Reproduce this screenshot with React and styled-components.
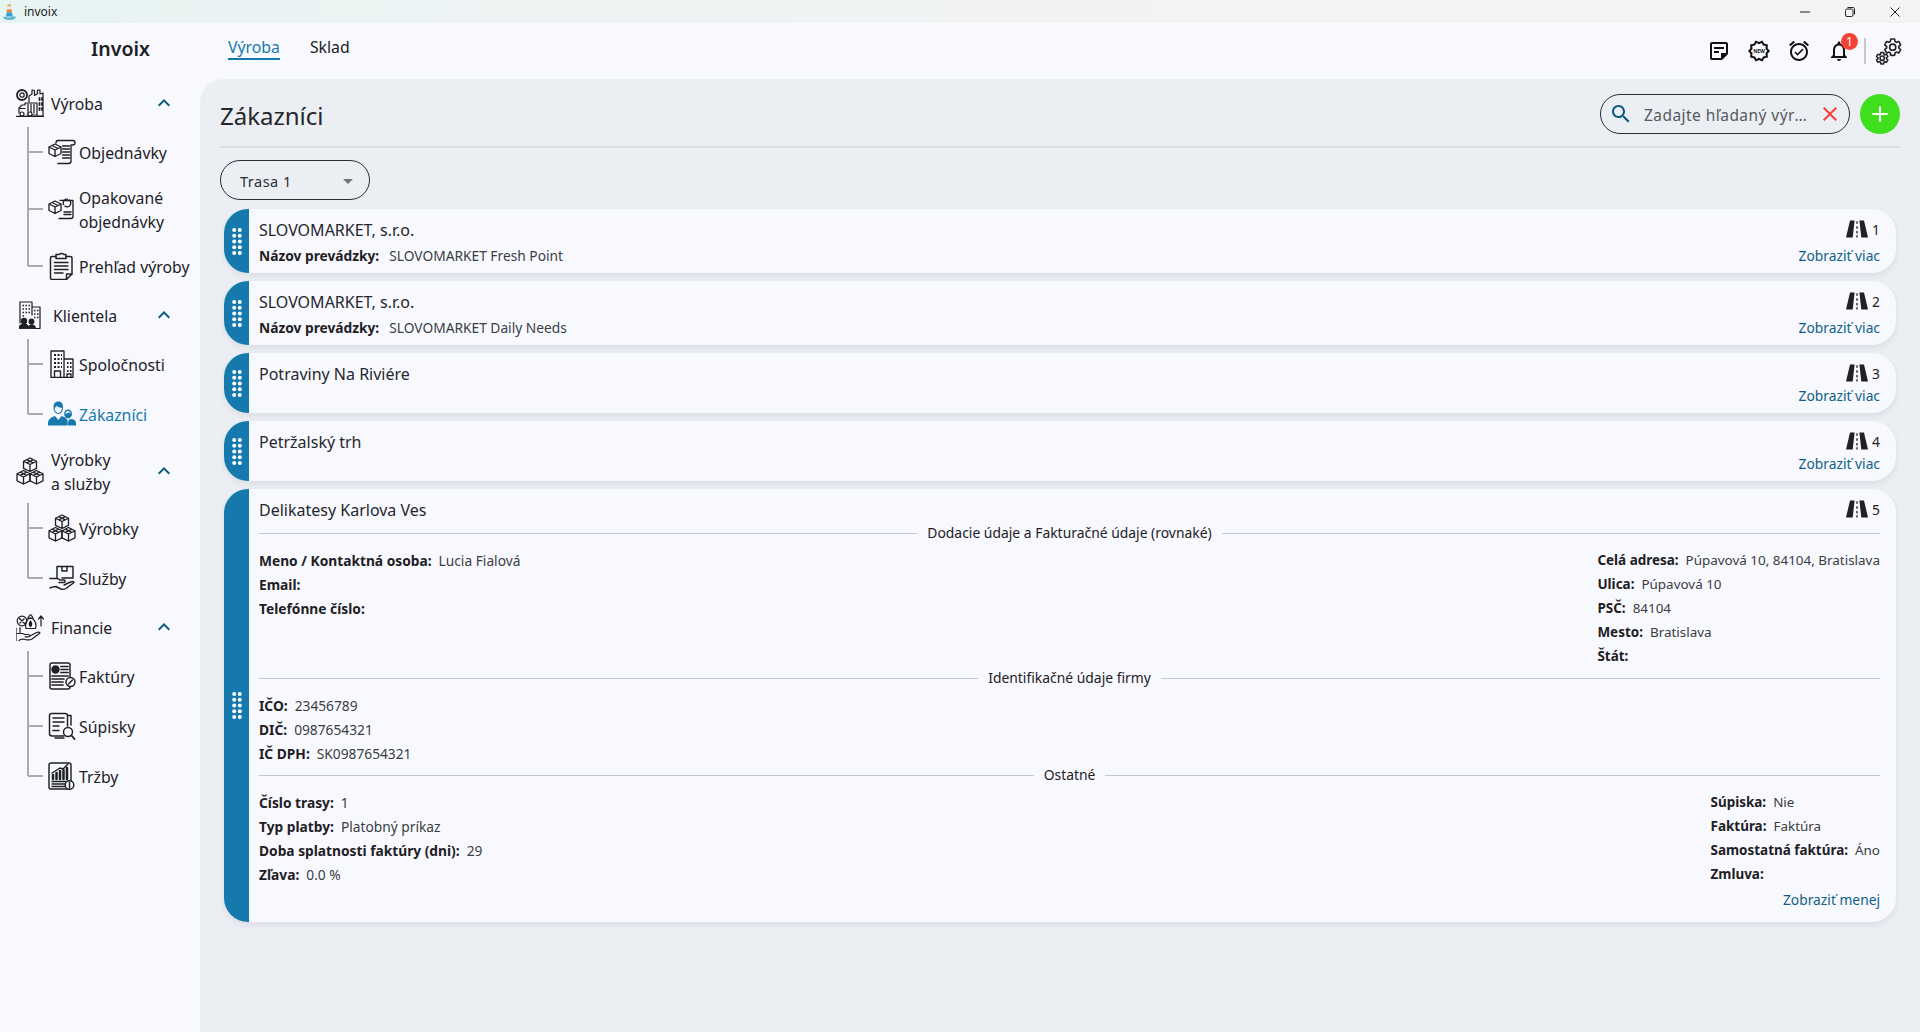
import React from 'react';
import styled, { createGlobalStyle } from 'styled-components';

const Global = createGlobalStyle`
  html, body { margin: 0; padding: 0; background: #f8f9ff; }
  body { font-family: "Noto Sans", "Liberation Sans", sans-serif; color: #1e2024; }
  * { box-sizing: border-box; }
`;

const Page = styled.div`
  width: 1920px; height: 1032px; overflow: hidden;
  display: flex; flex-direction: column; background: #f8f9ff;
`;
const TitleBar = styled.div`
  height: 23px; flex: none; display: flex; align-items: center;
  padding-left: 3px;
  background: linear-gradient(90deg, #e6f4f2 0%, #eff3f4 30%, #f3f3f3 70%, #f3f3f3 100%);
`;
const AppName = styled.span`
  font-family: "Noto Sans", sans-serif; font-size: 12px; color: #222; margin-left: 8px; flex: 1;
`;
const WinButtons = styled.div`display: flex; align-items: center; padding-right: 3px;`;
const WinBtn = styled.div`width: 45px; height: 20px; display: flex; align-items: center; justify-content: center; color: #222;`;

const Header = styled.header`height: 56px; flex: none; display: flex; align-items: center;`;
const Brand = styled.div`
  width: 200px; padding-left: 41px; text-align: center;
  font-size: 19.5px; font-weight: 600; color: #1e2024; line-height: 24px; margin-top: -4px;
`;
const Tabs = styled.nav`display: flex; gap: 30px; margin-left: 28px; flex: 1; margin-top: -5px;`;
const Tab = styled.a`
  font-size: 15.8px; line-height: 20px; padding-bottom: 1px;
  font-weight: 400;
  color: ${p => (p.$active ? '#1679ad' : '#1e2024')};
  border-bottom: 2px solid ${p => (p.$active ? '#1679ad' : 'transparent')};
`;
const Tools = styled.div`display: flex; align-items: center; padding-right: 17px;`;
const ToolBtn = styled.div`
  width: 40px; height: 32px; display: flex; align-items: center; justify-content: center;
  position: relative; color: #111;
`;
const BadgeCount = styled.span`
  position: absolute; right: 1px; top: -2px; width: 17px; height: 17px; border-radius: 50%;
  background: #f44336; color: #fff; font-size: 12px; line-height: 17px; text-align: center;
`;
const ToolDivider = styled.div`width: 2px; height: 26px; background: #c8c8c8; margin: 0 9px 0 5px;`;

const Body = styled.div`flex: 1; min-height: 0; display: flex;`;
const Sidebar = styled.aside`width: 200px; flex: none;`;
const GroupHead = styled.div`
  height: ${p => (p.$double ? 64 : 48)}px; display: flex; align-items: center;
  padding: 0 24px 0 ${p => (p.$indent ? 19 : 16)}px; font-size: 15.8px; line-height: 24px;
`;
const GroupIcon = styled.div`
  width: ${p => (p.$indent ? 34 : 35)}px; flex: none; display: flex;
`;
const GroupLabel = styled.span`flex: 1; padding-top: 2px;`;
const Tree = styled.ul`list-style: none; margin: 0; padding: 0;`;
const TreeItem = styled.li`
  position: relative; height: ${p => (p.$double ? 64 : 50)}px;
  display: flex; align-items: center; padding-left: 48px; gap: 3px;
  font-size: 15.8px; line-height: 24px; color: ${p => (p.$active ? '#1679ad' : '#1e2024')};
  &::before {
    content: ''; position: absolute; left: 27px; top: 0; width: 2px; background: #ababab;
    height: ${p => (p.$last ? '50%' : '100%')};
  }
  &::after {
    content: ''; position: absolute; left: 28px; top: calc(50% - 1px); width: 15px; height: 2px; background: #ababab;
  }
`;
const TreeIcon = styled.div`width: 28px; flex: none; display: flex; justify-content: center;`;
const TreeLabel = styled.span`padding-top: 2px; white-space: nowrap;`;

const Main = styled.main`
  flex: 1; min-width: 0; background: #ebeef3; border-top-left-radius: 24px; padding: 15px 20px 0;
`;
const TitleRow = styled.div`
  height: 54px; display: flex; align-items: flex-start; border-bottom: 2px solid #d9dce1;
`;
const PageTitle = styled.h1`
  margin: 0; flex: 1; font-size: 24px; font-weight: 400; line-height: 44px; color: #24272c;
`;
const Search = styled.div`
  width: 250px; height: 40px; border: 1px solid #2a2d33; border-radius: 20px;
  display: flex; align-items: center; padding: 0 7px 0 8px; gap: 11px;
`;
const SearchText = styled.span`
  flex: 1; min-width: 0; overflow: hidden; white-space: nowrap; text-overflow: ellipsis;
  font-size: 15.5px; letter-spacing: 0.45px; color: #565a60; padding-top: 2px;
`;
const AddBtn = styled.div`
  width: 40px; height: 40px; border-radius: 50%; background: #3fdf1e; margin-left: 10px;
  display: flex; align-items: center; justify-content: center; color: #fff;
`;
const Select = styled.div`
  width: 150px; height: 40px; margin-top: 12px; border: 1px solid #2a2d33; border-radius: 20px;
  display: flex; align-items: center; justify-content: space-between; padding: 1px 9px 0 19px;
  font-size: 14.5px; letter-spacing: 0.5px; color: #2a2d33;
`;
const CardList = styled.div`margin: 9px 4px 0; display: flex; flex-direction: column; gap: 8px;`;
const Card = styled.article`
  display: flex; background: #f8f9ff; border-radius: 24px; overflow: hidden;
  box-shadow: 0 3px 6px rgba(40, 50, 70, 0.08);
`;
const Handle = styled.div`
  width: 25px; flex: none; background: #1679ad; display: flex; align-items: center; justify-content: center;
`;
const CardBody = styled.div`flex: 1; min-width: 0; padding: 10px 16px 5px 10px;`;
const CardHead = styled.div`
  height: 21px; display: flex; align-items: center; justify-content: space-between;
`;
const CardTitle = styled.h2`margin: 0; font-size: 16px; font-weight: 400; line-height: 22px; color: #24272c;`;
const RouteNo = styled.div`display: flex; align-items: center; gap: 4px; font-size: 13.8px; color: #1e2024; padding-bottom: 1px;`;
const CardFoot = styled.div`
  margin-top: ${p => (p.$gap ? 4 : 0)}px; height: 24px; display: flex; align-items: center; justify-content: space-between;
`;
const Link = styled.a`font-size: 13.8px; line-height: 24px; color: #0f5f85; margin-left: auto;`;
const Field = styled.div`
  height: 24px; display: flex; align-items: center; gap: ${p => p.$gap || 7}px;
  font-size: ${p => (p.$narrow ? 13.45 : 13.75)}px; white-space: nowrap; padding-bottom: 2px;
`;
const Label = styled.b`font-weight: 700; color: #1e2024;`;
const Value = styled.span`font-weight: 400; color: #3a3d42;`;
const Divider = styled.div`
  height: 18px; display: flex; align-items: center; gap: 10px; font-size: 13.9px; color: #1e2024;
  margin-top: ${p => (p.$first ? 4 : 0)}px; padding-bottom: 2px;
  &::before, &::after { content: ''; flex: 1; height: 1px; background: #bfc7d0; transform: translateY(1px); }
`;
const Columns = styled.div`margin-top: 7px; display: flex; justify-content: space-between;`;
const MenejRow = styled.div`margin-top: 1px; margin-bottom: 5px; display: flex; justify-content: flex-end; height: 24px;`;

/* ---------- icons ---------- */
const Line = styled.svg`
  display: block; flex: none; fill: none; stroke: #1e2024; stroke-width: ${p => (p.$w || 1.1) * 1.12}; stroke-linejoin: round; stroke-linecap: round;
`;
const Mat = ({ d, size = 24, color = 'currentColor' }) => (
  <svg width={size} height={size} viewBox="0 0 24 24" fill={color} style={{ display: 'block', flex: 'none' }}><path d={d} /></svg>
);
const D = {
  note: 'M19 5v9l-5 0 0 5H5V5H19M19 3H5C3.9 3 3 3.9 3 5v14c0 1.1.9 2 2 2h10l6-6V5C21 3.9 20.1 3 19 3zM12 14H7v-2h5V14zM17 10H7V8h10V10z',
  badge: 'm23 12-2.44-2.78.34-3.68-3.61-.82-1.89-3.18L12 3 8.6 1.54 6.71 4.72l-3.61.81.34 3.68L1 12l2.44 2.78-.34 3.69 3.61.82 1.89 3.18L12 21l3.4 1.46 1.89-3.18 3.61-.82-.34-3.68L23 12zm-4.51 2.11.26 2.79-2.74.62-1.43 2.41L12 18.82l-2.58 1.11-1.43-2.41-2.74-.62.26-2.8L3.66 12l1.85-2.12-.26-2.78 2.74-.61 1.43-2.41L12 5.18l2.58-1.11 1.43 2.41 2.74.62-.26 2.79L20.34 12l-1.85 2.11z',
  alarm: 'M22 5.72l-4.6-3.86-1.29 1.53 4.6 3.86L22 5.72zM7.88 3.39L6.6 1.86 2 5.71l1.29 1.53 4.59-3.85zM12 4c-4.97 0-9 4.03-9 9s4.02 9 9 9c4.97 0 9-4.03 9-9s-4.03-9-9-9zm0 16c-3.87 0-7-3.13-7-7s3.13-7 7-7 7 3.13 7 7-3.13 7-7 7zm-1.46-5.47L8.41 12.4l-1.06 1.06 3.18 3.18 6-6-1.06-1.06-4.93 4.95z',
  bell: 'M12 22c1.1 0 2-.9 2-2h-4c0 1.1.9 2 2 2zm6-6v-5c0-3.07-1.63-5.64-4.5-6.32V4c0-.83-.67-1.5-1.5-1.5s-1.5.67-1.5 1.5v.68C7.64 5.36 6 7.92 6 11v5l-2 2v1h16v-1l-2-2zm-2 1H8v-6c0-2.48 1.51-4.5 4-4.5s4 2.02 4 4.5v6z',
  search: 'M15.5 14h-.79l-.28-.27C15.41 12.59 16 11.11 16 9.5 16 5.91 13.09 3 9.5 3S3 5.91 3 9.5 5.91 16 9.5 16c1.61 0 3.09-.59 4.23-1.57l.27.28v.79l5 4.99L20.49 19l-4.99-5zm-6 0C7.01 14 5 11.99 5 9.5S7.01 5 9.5 5 14 7.01 14 9.5 11.99 14 9.5 14z',
  clear: 'M19 6.41 17.59 5 12 10.59 6.41 5 5 6.41 10.59 12 5 17.59 6.41 19 12 13.41 17.59 19 19 17.59 13.41 12z',
  up: 'M12 8l-6 6 1.41 1.41L12 10.83l4.59 4.58L18 14z',
  drop: 'M7 10l5 5 5-5z',
  add: 'M19 13h-6v6h-2v-6H5v-2h6V5h2v6h6v2z',
  gear: 'M19.14 12.94c.04-.3.06-.61.06-.94 0-.32-.02-.64-.07-.94l2.03-1.58c.18-.14.23-.41.12-.61l-1.92-3.32c-.12-.22-.37-.29-.59-.22l-2.39.96c-.5-.38-1.03-.7-1.62-.94l-.36-2.54c-.04-.24-.24-.41-.48-.41h-3.84c-.24 0-.43.17-.47.41l-.36 2.54c-.59.24-1.13.57-1.62.94l-2.39-.96c-.22-.08-.47 0-.59.22L2.74 8.87c-.12.21-.08.47.12.61l2.03 1.58c-.05.3-.09.63-.09.94s.02.64.07.94l-2.03 1.58c-.18.14-.23.41-.12.61l1.92 3.32c.12.22.37.29.59.22l2.39-.96c.5.38 1.03.7 1.62.94l.36 2.54c.05.24.24.41.48.41h3.84c.24 0 .44-.17.47-.41l.36-2.54c.59-.24 1.13-.56 1.62-.94l2.39.96c.22.08.47 0 .59-.22l1.92-3.32c.12-.22.07-.47-.12-.61l-2.01-1.58zM12 15.6c-1.98 0-3.6-1.62-3.6-3.6s1.62-3.6 3.6-3.6 3.6 1.62 3.6 3.6-1.62 3.6-3.6 3.6z',
};

const Lighthouse = () => (
  <svg width="13" height="17" viewBox="0 0 13 17" style={{ display: 'block', flex: 'none' }}>
    <path d="M4.500 1.500h3.500v2H4.500z" fill="#f39a3a" />
    <path d="M4.500 3.500H8l.5 3H4z" fill="#e9e9e9" />
    <path d="M4 6.500h4.500l.5 3H3.600z" fill="#ee7a35" />
    <path d="M3.600 9.500H9l.7 4H3z" fill="#2aa3d8" />
    <path d="M0 14c3 -1 4 1 6.500 .4S11 13 13 14c-1 2.400 -4 3-6.500 3S1 16.400 0 14z" fill="#5fb3c9" />
  </svg>
);

const Gears = () => (
  <svg width="28" height="28" viewBox="0 0 28 28" fill="none" stroke="#222" strokeWidth="1.900" style={{ display: 'block', flex: 'none' }}>
    <g transform="translate(7.500 0) scale(.85)"><path d={D.gear} /></g>
    <g transform="translate(0 14) scale(.6)"><path d={D.gear} strokeWidth="2.600" /></g>
  </svg>
);

const NewBadge = () => (
  <svg width="24" height="24" viewBox="0 0 24 24" style={{ display: 'block' }}>
    <path d={D.badge} fill="#111" />
    <text x="12" y="13.800" textAnchor="middle" fontFamily="Noto Sans, sans-serif" fontSize="5" fontWeight="700" fill="#111">NEW</text>
  </svg>
);

const Road = () => (
  <svg width="22" height="18" viewBox="0 0 23 18" style={{ display: 'block', flex: 'none' }}>
    <path d="M4.200 0H9L7 18H0z" fill="#1f2126" />
    <path d="M14 0h4.800L23 18h-7z" fill="#1f2126" />
    <path d="M11.500 1v2.600M11.500 6v2.800M11.500 11v2.800M11.500 15.500V18" stroke="#1f2126" strokeWidth="1.400" fill="none" />
  </svg>
);

const Dots = () => (
  <svg width="10" height="27" viewBox="0 0 10 27" fill="#fff" style={{ display: 'block' }}>
    {[2.2, 7.8].flatMap(x => [2, 7.700, 13.500, 19.200, 25].map(y => <circle key={`${x}-${y}`} cx={x} cy={y} r="2" />))}
  </svg>
);

const Cube = ({ x, y, s = 1.08 }) => (
  <g transform={`translate(${x} ${y}) scale(${s})`}>
    <path d="M0-6 6-3V3.500L0 6.500-6 3.500V-3zM-6-3 0 0 6-3M0 0V6.500M-3-4.500 3-1.500M3-4.500-3-1.500" />
  </g>
);
const BoxesIcon = () => (
  <Line width="28" height="28" viewBox="0 0 28 28">
    <Cube x={14} y={7.500} /><Cube x={7.500} y={20} /><Cube x={20.500} y={20} />
  </Line>
);
const DocBoxIcon = ({ sync }) => (
  <Line width="28" height="28" viewBox="0 0 28 28" $w="1.200">
    {sync ? (
      <>
        <path d="M12 5.500H25V21c0 2-1 2.500-2 2.500H11" />
        <circle cx="19" cy="8" r="3.800" strokeDasharray="8 2" />
        <path d="M16 17h7M16 19.500h7" />
      </>
    ) : (
      <>
        <path d="M10 2.500h15c1.500 0 2 1 2 2.500s-.5 2-2 2h-2V23c0 1.500-1 2.500-2.500 2.500H10" />
        <path d="M10 2.500c-1.500 0-2 1-2 2.500" />
        <path d="M14.500 8h7M14.500 11h7M14.500 14h7M14.500 17h7M14.500 20h7" />
      </>
    )}
    <rect x="0" y="6" width="14" height="15" fill="#f8f9ff" stroke="none" />
    <path d="M7 6 13 9V15.500L7 18.500 1 15.500V9zM1 9 7 12 13 9M7 12V18.500M4 7.500 10 10.500" />
  </Line>
);
const ClipboardIcon = () => (
  <Line width="28" height="28" viewBox="0 0 28 28" $w="1.300">
    <path d="M8 4.500H4c-1 0-1.500.7-1.500 1.500V26c0 .8.5 1.500 1.500 1.500H18.500L24 22V6c0-.8-.5-1.500-1.500-1.500H18" />
    <path d="M8 2.500h3.200a2.500 1.800 0 0 1 4.600 0H18v4H8zM18.500 27.500V22H24" />
    <path d="M6.500 10.500H20M6.500 14H20M6.500 17.500H20M6.500 21H15" />
  </Line>
);
const CompanyIcon = () => (
  <Line width="24" height="28" viewBox="0 0 24 28" $w="1.200">
    <path d="M1 27.500V1H14V27.500H1M14 9H23V27.500H14" />
    <path d="M4 5h2M7.500 5h2M11 5h1M4 9h2M7.500 9h2M11 9h1M4 13h2M7.500 13h2M11 13h1M4 17h2M7.500 17h2M11 17h1M17 13h1.500M20 13h1.500M17 17h1.500M20 17h1.500M17 21h1.500M20 21h1.500" strokeWidth="1.800" strokeLinecap="butt" />
    <path d="M4.500 27v-6h6v6M17 27v-3h4v3" />
  </Line>
);
const ClientIcon = () => (
  <Line width="22" height="28" viewBox="0 0 22 28" $w="1.100">
    <path d="M1 22V1H13V14M13 6H21V27.500H17" />
    <path d="M3.500 4.500h1.500M6.500 4.500H8M9.500 4.500H11M3.500 8H5M6.500 8H8M9.500 8H11M3.500 11.500H5M6.500 11.500H8M9.500 11.500H11M3.500 15H5M15 9.500h1.500M18 9.500h1.500M15 13h1.500M18 13h1.500M15 16.500h1.500M18 16.500h1.500" strokeWidth="1.700" strokeLinecap="butt" />
    <circle cx="5" cy="20" r="2.600" fill="#1e2024" />
    <circle cx="12.500" cy="20.500" r="2.300" fill="#1e2024" />
    <path d="M0 27.800c0-3 2-4.500 5-4.500s5 1.500 5 4.500zM10 27.800c0-2.400 .8-4 2.500-4s4 1.400 4 4z" fill="#1e2024" />
  </Line>
);
const CustomersIcon = () => (
  <svg width="28" height="28" viewBox="0 0 28 28" fill="#1679ad" style={{ display: 'block', flex: 'none' }}>
    <path d="M5.500 7.500c0-4 1.700-6 4.800-6s4.800 2 4.800 6c0 3.500-2 6.500-4.800 6.500s-4.800-3-4.800-6.500zm1.200.200c0 2.800 1.500 5.300 3.600 5.300s3.600-2.500 3.600-5.300c-2 0-3.800-.5-5-2-.5 1-1.200 1.700-2.200 2z" />
    <path d="M0 23.500c0-4.500 3.500-6.500 7-7.500l3.300 4 3.300-4c2.500.7 5 2 6 4.500v5H0v-2z" />
    <path d="M20 9.500c2.500 0 4 1.800 4 4.300 0 2.700-1.700 4.700-4 4.700s-3.800-2-3.800-4.700c0-2.500 1.500-4.300 3.800-4.300zm0 1.400c-1.500 0-2.500 1.200-2.600 2.700 1.500 0 3-.5 3.800-1.500.4.700 1.200 1.200 1.800 1.300-.1-1.500-1.300-2.500-3-2.500z" />
    <path d="M21 19.500l3-.5c2 .7 4 1.500 4 4v2.500h-8v-3z" />
  </svg>
);
const HandBoxIcon = () => (
  <Line width="28" height="28" viewBox="0 0 28 28" $w="1.300">
    <path d="M9 14V2.500H25V14H14" />
    <path d="M14 2.500V7h5V2.500" />
    <path d="M2 14.500h7c1.500 0 2 .5 3 1.500h4c1.500 0 1.500 2.500 0 2.500h-5" />
    <path d="M2 24c2-1 4-1.500 6-1.500l5 2.500c2 .7 3.500.5 5-.5l8-6c-1-1.500-2.500-1-3.500-.5L16 21" />
  </Line>
);
const FactoryIcon = () => (
  <Line width="28" height="28" viewBox="0 0 28 28" $w="1.100">
    <circle cx="6" cy="6" r="5" strokeDasharray="2.200 .8" strokeWidth="1.800" />
    <circle cx="6" cy="6" r="2.200" />
    <path d="M13 13 13 7l3-2V1l2.500 .5v5l3-2V1h2.500v4L27 4V27H21" />
    <path d="M23.500 9v2M23.500 14v2M23.500 19v2M26 9v2M26 14v2M26 19v2" strokeWidth="1.800" />
    <path d="M3 24v-5l3-3h3v-2h12v12H11" fill="#f8f9ff" />
    <path d="M12 15v9M15 15v9M18 15v9M4 19.500h5" />
    <circle cx="6" cy="25" r="2" fill="#f8f9ff" /><circle cx="14" cy="25" r="2" fill="#f8f9ff" />
    <path d="M0 27.500H28" strokeWidth="1.400" />
  </Line>
);
const FinanceIcon = () => (
  <Line width="28" height="28" viewBox="0 0 28 28" $w="1.100">
    <circle cx="6" cy="8" r="4.800" />
    <path d="M3.500 5.500 8.500 10.500M4 10 8 6" />
    <path d="M12 5h5l-1.500-2.500c-.5-1-1-1-2 0zM12.500 5.500C10 8 9 12 10 15.500h9.500c1-3.500 0-7.500-3-10z" />
    <path d="M14.500 8c-1.500 2-1.500 4 0 5.500 1.500-1.500 1.500-3.500 0-5.500z" fill="#1e2024" />
    <path d="M25 13V3.500M22.500 6 25 3l2.500 3" />
    <path d="M1 20.500h5c1.500 0 2 1 3 1h3.500c1.500 0 1.500 2.300 0 2.300H9M3 27.500c2-2 4-1.500 6-1 3 .8 5 .8 7-.5l8-6c-1-1.500-2.500-1-3.500-.5L14 23" />
    <path d="M0 15v13M4 14.500v5" />
  </Line>
);
const InvoiceIcon = () => (
  <Line width="28" height="28" viewBox="0 0 28 28" $w="1.300">
    <rect x="2" y="1" width="20" height="26" rx="2" />
    <circle cx="7.500" cy="7.500" r="3.500" fill="#1e2024" />
    <path d="M13 4.500H20M13 7.500H20M13 10.500H20M4 14H20M4 17H16M4 20H15M4 23H15" strokeWidth="1.700" />
    <circle cx="22.500" cy="20" r="4.500" fill="#f8f9ff" />
    <path d="M20.500 22 24.500 18" />
  </Line>
);
const SearchDocIcon = () => (
  <Line width="28" height="28" viewBox="0 0 28 28" $w="1.300">
    <path d="M16 24H4c-1.500 0-2.500-1-2.500-2.500V3.500C1.500 2.200 2.500 1.500 4 1.500H17c1.500 0 2.500.7 2.500 2V14M19.500 3.500H23V13" />
    <path d="M5 6h11M5 10h11M5 14h6M5 18.500 H11M7 26H16" />
    <circle cx="20" cy="20" r="4.500" />
    <path d="M23.500 23.500 26.500 27" strokeWidth="1.900" />
  </Line>
);
const RevenueIcon = () => (
  <Line width="28" height="28" viewBox="0 0 28 28" $w="1.300">
    <rect x="1" y="1" width="22" height="26" rx="2" />
    <path d="M5 17v-4M8.500 17v-6M12 17v-8M15.500 17V8M19 17V6" strokeWidth="2.500" />
    <path d="M4 11 12 6l3 1 5-5M4 19.500H18M4 22H17M4 24.500H17" />
    <circle cx="21.500" cy="23" r="4.300" fill="#f8f9ff" />
    <path d="M21.500 20.500v5" />
  </Line>
);

/* ---------- data ---------- */
const nav = [
  { label: 'Výroba', icon: <FactoryIcon />, items: [
    { label: 'Objednávky', icon: <DocBoxIcon /> },
    { label: <>Opakované<br />objednávky</>, icon: <DocBoxIcon sync />, double: true },
    { label: 'Prehľad výroby', icon: <ClipboardIcon /> },
  ] },
  { label: 'Klientela', indent: true, icon: <ClientIcon />, items: [
    { label: 'Spoločnosti', icon: <CompanyIcon /> },
    { label: 'Zákazníci', icon: <CustomersIcon />, active: true },
  ] },
  { label: <>Výrobky<br />a služby</>, double: true, icon: <BoxesIcon />, items: [
    { label: 'Výrobky', icon: <BoxesIcon /> },
    { label: 'Služby', icon: <HandBoxIcon /> },
  ] },
  { label: 'Financie', icon: <FinanceIcon />, items: [
    { label: 'Faktúry', icon: <InvoiceIcon /> },
    { label: 'Súpisky', icon: <SearchDocIcon /> },
    { label: 'Tržby', icon: <RevenueIcon /> },
  ] },
];
const short = [
  { title: 'SLOVOMARKET, s.r.o.', sub: 'SLOVOMARKET Fresh Point', no: 1 },
  { title: 'SLOVOMARKET, s.r.o.', sub: 'SLOVOMARKET Daily Needs', no: 2 },
  { title: 'Potraviny Na Riviére', no: 3 },
  { title: 'Petržalský trh', no: 4 },
];

const Fields = ({ rows, narrow }) => (
  <div>
    {rows.map(([l, v]) => (
      <Field key={l} $narrow={narrow}><Label>{l}:</Label>{v && <Value>{v}</Value>}</Field>
    ))}
  </div>
);

export default function App() {
  return (
    <Page>
      <Global />
      <TitleBar>
        <Lighthouse />
        <AppName>invoix</AppName>
        <WinButtons>
          <WinBtn><svg width="10" height="10" viewBox="0 0 10 10"><path d="M0 5h10" stroke="#222" /></svg></WinBtn>
          <WinBtn><svg width="10" height="10" viewBox="0 0 10 10" fill="none" stroke="#222"><rect x=".5" y="2" width="7.500" height="7.500" rx="1.500" /><path d="M2.500 .5H8c1 0 1.500 .6 1.500 1.500v5.500" /></svg></WinBtn>
          <WinBtn><svg width="10" height="10" viewBox="0 0 10 10"><path d="M.5 .5l9 9M9.500 .5l-9 9" stroke="#222" /></svg></WinBtn>
        </WinButtons>
      </TitleBar>
      <Header>
        <Brand>Invoix</Brand>
        <Tabs>
          <Tab $active>Výroba</Tab>
          <Tab>Sklad</Tab>
        </Tabs>
        <Tools>
          <ToolBtn><Mat d={D.note} /></ToolBtn>
          <ToolBtn><NewBadge /></ToolBtn>
          <ToolBtn><Mat d={D.alarm} /></ToolBtn>
          <ToolBtn><Mat d={D.bell} /><BadgeCount>1</BadgeCount></ToolBtn>
          <ToolDivider />
          <Gears />
        </Tools>
      </Header>
      <Body>
        <Sidebar>
          {nav.map((g, gi) => (
            <section key={gi}>
              <GroupHead $double={g.double} $indent={g.indent}>
                <GroupIcon $indent={g.indent}>{g.icon}</GroupIcon>
                <GroupLabel>{g.label}</GroupLabel>
                <Mat d={D.up} color="#0b5a80" />
              </GroupHead>
              <Tree>
                {g.items.map((it, i) => (
                  <TreeItem key={i} $double={it.double} $active={it.active} $last={i === g.items.length - 1}>
                    <TreeIcon>{it.icon}</TreeIcon>
                    <TreeLabel>{it.label}</TreeLabel>
                  </TreeItem>
                ))}
              </Tree>
            </section>
          ))}
        </Sidebar>
        <Main>
          <TitleRow>
            <PageTitle>Zákazníci</PageTitle>
            <Search>
              <Mat d={D.search} color="#0b5a80" />
              <SearchText>Zadajte hľadaný výraz</SearchText>
              <Mat d={D.clear} color="#f44336" />
            </Search>
            <AddBtn><Mat d={D.add} size={26} /></AddBtn>
          </TitleRow>
          <Select>
            Trasa 1
            <Mat d={D.drop} color="#757575" />
          </Select>
          <CardList>
            {short.map(c => (
              <Card key={c.no}>
                <Handle><Dots /></Handle>
                <CardBody>
                  <CardHead>
                    <CardTitle>{c.title}</CardTitle>
                    <RouteNo><Road />{c.no}</RouteNo>
                  </CardHead>
                  <CardFoot $gap={!!c.sub}>
                    {c.sub && <Field $gap={10}><Label>Názov prevádzky:</Label><Value>{c.sub}</Value></Field>}
                    <Link>Zobraziť viac</Link>
                  </CardFoot>
                </CardBody>
              </Card>
            ))}
            <Card>
              <Handle><Dots /></Handle>
              <CardBody>
                <CardHead>
                  <CardTitle>Delikatesy Karlova Ves</CardTitle>
                  <RouteNo><Road />5</RouteNo>
                </CardHead>
                <Divider $first>Dodacie údaje a Fakturačné údaje (rovnaké)</Divider>
                <Columns>
                  <Fields rows={[['Meno / Kontaktná osoba', 'Lucia Fialová'], ['Email'], ['Telefónne číslo']]} />
                  <Fields narrow rows={[['Celá adresa', 'Púpavová 10, 84104, Bratislava'], ['Ulica', 'Púpavová 10'], ['PSČ', '84104'], ['Mesto', 'Bratislava'], ['Štát']]} />
                </Columns>
                <Divider>Identifikačné údaje firmy</Divider>
                <Columns>
                  <Fields rows={[['IČO', '23456789'], ['DIČ', '0987654321'], ['IČ DPH', 'SK0987654321']]} />
                </Columns>
                <Divider>Ostatné</Divider>
                <Columns>
                  <Fields rows={[['Číslo trasy', '1'], ['Typ platby', 'Platobný príkaz'], ['Doba splatnosti faktúry (dni)', '29'], ['Zľava', '0.0 %']]} />
                  <Fields narrow rows={[['Súpiska', 'Nie'], ['Faktúra', 'Faktúra'], ['Samostatná faktúra', 'Áno'], ['Zmluva']]} />
                </Columns>
                <MenejRow><Link>Zobraziť menej</Link></MenejRow>
              </CardBody>
            </Card>
          </CardList>
        </Main>
      </Body>
    </Page>
  );
}
